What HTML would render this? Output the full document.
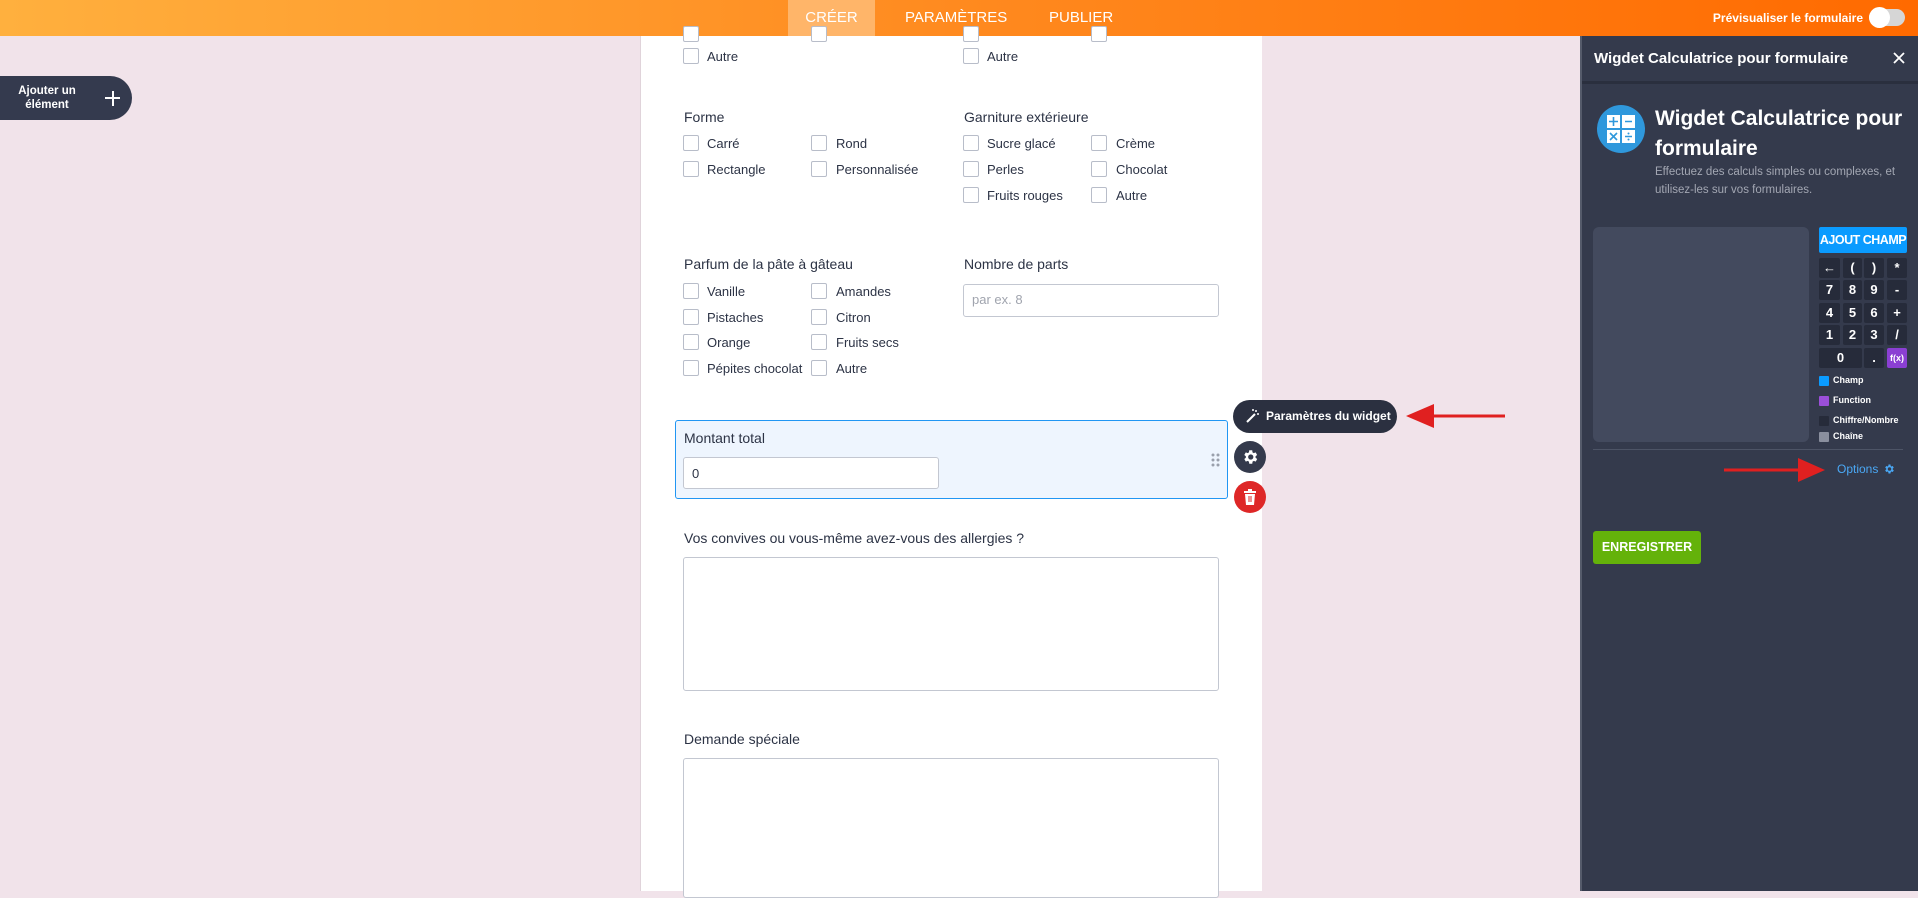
<!DOCTYPE html>
<html><head><meta charset="utf-8">
<style>
*{box-sizing:border-box;margin:0;padding:0}
body{width:1918px;height:891px;overflow:hidden;background:#f1e3ea;font-family:"Liberation Sans",sans-serif;position:relative;color:#2c3345}
.a{position:absolute}
.hdr{left:0;top:0;width:1918px;height:36px;background:linear-gradient(90deg,#ffb03e,#ff8a1f 50%,#ff6a00)}
.tab{top:0;height:36px;line-height:36px;color:#fff;font-size:15px;text-align:center}
.form{left:640px;top:36px;width:622px;height:855px;background:#fff;border-left:1px solid #e0d3da}
.cb{width:16px;height:16px;border:1px solid #b8bdc9;border-radius:2px;background:#fff}
.t{font-size:13px;color:#2c3345;white-space:nowrap}
.lbl{font-size:14px;color:#2c3345;white-space:nowrap}
.inp{border:1px solid #c3c7d1;border-radius:3px;background:#fff}
.panel{left:1580px;top:36px;width:338px;height:855px;background:#343a4c}
.key{background:#262b3a;color:#fff;font-size:13px;font-weight:bold;text-align:center;line-height:20px;height:20px;border-radius:2px}
.lg{font-size:9px;font-weight:bold;color:#fff}
.sq{width:10px;height:10px;border-radius:1px}
</style></head><body>
<div class="a hdr"></div>
<div class="a tab" style="left:788px;width:87px;background:#ffb569">CRÉER</div>
<div class="a tab" style="left:905px">PARAMÈTRES</div>
<div class="a tab" style="left:1049px">PUBLIER</div>
<div class="a" style="right:55px;top:11px;font-size:12px;color:#fff;font-weight:bold">Prévisualiser le formulaire</div>
<div class="a" style="left:1869px;top:9px;width:36px;height:17px;border-radius:9px;background:#d6d6d6"></div>
<div class="a" style="left:1869px;top:7px;width:21px;height:21px;border-radius:50%;background:#fff"></div>

<div class="a" style="left:0;top:76px;width:132px;height:44px;background:#343a4e;border-radius:0 22px 22px 0"></div>
<div class="a" style="left:12px;top:84px;width:70px;color:#fff;font-size:11.5px;font-weight:bold;text-align:center;line-height:14px">Ajouter un élément</div>
<div class="a" style="left:105px;top:97px;width:15px;height:2px;background:#fff"></div>
<div class="a" style="left:111.5px;top:90.5px;width:2px;height:15px;background:#fff"></div>

<div class="a form"></div>
<div class="a cb" style="left:683px;top:26px"></div><div class="a cb" style="left:811px;top:26px"></div><div class="a cb" style="left:963px;top:26px"></div><div class="a cb" style="left:1091px;top:26px"></div>
<div class="a cb" style="left:683px;top:48px"></div><div class="a t" style="left:707px;top:49px">Autre</div>
<div class="a cb" style="left:963px;top:48px"></div><div class="a t" style="left:987px;top:49px">Autre</div>

<div class="a lbl" style="left:684px;top:109px">Forme</div>
<div class="a lbl" style="left:964px;top:109px">Garniture extérieure</div>
<div class="a cb" style="left:683px;top:135px"></div><div class="a t" style="left:707px;top:136px">Carré</div>
<div class="a cb" style="left:811px;top:135px"></div><div class="a t" style="left:836px;top:136px">Rond</div>
<div class="a cb" style="left:683px;top:161px"></div><div class="a t" style="left:707px;top:162px">Rectangle</div>
<div class="a cb" style="left:811px;top:161px"></div><div class="a t" style="left:836px;top:162px">Personnalisée</div>
<div class="a cb" style="left:963px;top:135px"></div><div class="a t" style="left:987px;top:136px">Sucre glacé</div>
<div class="a cb" style="left:1091px;top:135px"></div><div class="a t" style="left:1116px;top:136px">Crème</div>
<div class="a cb" style="left:963px;top:161px"></div><div class="a t" style="left:987px;top:162px">Perles</div>
<div class="a cb" style="left:1091px;top:161px"></div><div class="a t" style="left:1116px;top:162px">Chocolat</div>
<div class="a cb" style="left:963px;top:187px"></div><div class="a t" style="left:987px;top:188px">Fruits rouges</div>
<div class="a cb" style="left:1091px;top:187px"></div><div class="a t" style="left:1116px;top:188px">Autre</div>

<div class="a lbl" style="left:684px;top:256px">Parfum de la pâte à gâteau</div>
<div class="a lbl" style="left:964px;top:256px">Nombre de parts</div>
<div class="a cb" style="left:683px;top:283px"></div><div class="a t" style="left:707px;top:284px">Vanille</div>
<div class="a cb" style="left:811px;top:283px"></div><div class="a t" style="left:836px;top:284px">Amandes</div>
<div class="a cb" style="left:683px;top:309px"></div><div class="a t" style="left:707px;top:310px">Pistaches</div>
<div class="a cb" style="left:811px;top:309px"></div><div class="a t" style="left:836px;top:310px">Citron</div>
<div class="a cb" style="left:683px;top:334px"></div><div class="a t" style="left:707px;top:335px">Orange</div>
<div class="a cb" style="left:811px;top:334px"></div><div class="a t" style="left:836px;top:335px">Fruits secs</div>
<div class="a cb" style="left:683px;top:360px"></div><div class="a t" style="left:707px;top:361px">Pépites chocolat</div>
<div class="a cb" style="left:811px;top:360px"></div><div class="a t" style="left:836px;top:361px">Autre</div>
<div class="a inp" style="left:963px;top:284px;width:256px;height:33px"></div>
<div class="a t" style="left:972px;top:292px;color:#a0a4ae">par ex. 8</div>

<div class="a" style="left:675px;top:420px;width:553px;height:79px;background:#eef5fe;border:1px solid #2196f3;border-radius:3px"></div>
<div class="a lbl" style="left:684px;top:430px">Montant total</div>
<div class="a inp" style="left:683px;top:457px;width:256px;height:32px"></div>
<div class="a t" style="left:692px;top:466px">0</div>
<svg class="a" style="left:1211px;top:453px" width="10" height="16"><g fill="#9aa0ac"><circle cx="2" cy="2" r="1.5"/><circle cx="7" cy="2" r="1.5"/><circle cx="2" cy="7" r="1.5"/><circle cx="7" cy="7" r="1.5"/><circle cx="2" cy="12" r="1.5"/><circle cx="7" cy="12" r="1.5"/></g></svg>

<div class="a" style="left:1233px;top:400px;width:164px;height:33px;background:#2b3040;border-radius:17px"></div>
<svg class="a" style="left:1244px;top:408px" width="16" height="16"><path d="M3 14 L11 6" stroke="#fff" stroke-width="2"/><g fill="#fff"><circle cx="12" cy="3" r="1"/><circle cx="14" cy="6" r="1"/><circle cx="9" cy="2" r="1"/></g></svg>
<div class="a" style="left:1266px;top:409px;font-size:12px;font-weight:bold;color:#fff">Paramètres du widget</div>
<div class="a" style="left:1234px;top:441px;width:32px;height:32px;border-radius:50%;background:#343a4c"></div>
<svg class="a" style="left:1241px;top:448px" width="18" height="18" viewBox="0 0 24 24"><path fill="#fff" d="M19.4 13a7.5 7.5 0 0 0 0-2l2.1-1.6-2-3.5-2.5 1a7 7 0 0 0-1.7-1L15 3h-4l-.4 2.9a7 7 0 0 0-1.7 1l-2.5-1-2 3.5L6.5 11a7.5 7.5 0 0 0 0 2l-2.1 1.6 2 3.5 2.5-1a7 7 0 0 0 1.7 1L11 21h4l.4-2.9a7 7 0 0 0 1.7-1l2.5 1 2-3.5zM13 15.5a3.5 3.5 0 1 1 0-7 3.5 3.5 0 0 1 0 7z"/></svg>
<div class="a" style="left:1234px;top:481px;width:32px;height:32px;border-radius:50%;background:#de2727"></div>
<svg class="a" style="left:1243px;top:489px" width="14" height="16"><path fill="#fff" d="M1 2h12v2H1zM5 0h4v2H5zM2 5h10l-1 11H3z"/><path d="M6 7v6M8 7v6" stroke="#de2727" stroke-width="1"/></svg>

<div class="a lbl" style="left:684px;top:530px">Vos convives ou vous-même avez-vous des allergies ?</div>
<div class="a inp" style="left:683px;top:557px;width:536px;height:134px"></div>
<div class="a lbl" style="left:684px;top:731px">Demande spéciale</div>
<div class="a inp" style="left:683px;top:758px;width:536px;height:140px"></div>

<svg class="a" style="left:1400px;top:400px" width="110" height="32"><path d="M105 16H30" stroke="#e02020" stroke-width="3"/><path d="M6 16 L34 4 L34 28Z" fill="#e02020"/></svg>

<div class="a panel"></div>
<div class="a" style="left:1580px;top:36px;width:2px;height:855px;background:#555b6b"></div>
<div class="a" style="left:1594px;top:50px;font-size:15px;font-weight:bold;color:#fff">Wigdet Calculatrice pour formulaire</div>
<svg class="a" style="left:1893px;top:52px" width="12" height="12"><path d="M1 1L11 11M11 1L1 11" stroke="#fff" stroke-width="1.8"/></svg>
<div class="a" style="left:1582px;top:81px;width:336px;height:3px;background:#2a2f3e"></div>
<div class="a" style="left:1597px;top:105px;width:48px;height:48px;border-radius:50%;background:#2f98dc"></div>
<svg class="a" style="left:1607px;top:115px" width="28" height="28"><g fill="#fff"><rect x="0" y="0" width="13" height="13"/><rect x="15" y="0" width="13" height="13"/><rect x="0" y="15" width="13" height="13"/><rect x="15" y="15" width="13" height="13"/></g><g stroke="#2f98dc" stroke-width="1.6"><path d="M6.5 2v9M2 6.5h9M18 6.5h7M3 18l7 7M10 18l-7 7M18 21.5h7"/></g><g fill="#2f98dc"><circle cx="21.5" cy="18.5" r="1"/><circle cx="21.5" cy="24.5" r="1"/></g></svg>
<div class="a" style="left:1655px;top:104px;font-size:21px;font-weight:bold;color:#fff;line-height:30px;width:262px">Wigdet Calculatrice pour formulaire</div>
<div class="a" style="left:1655px;top:163px;font-size:11.5px;color:#a3a7b3;line-height:18px;width:262px">Effectuez des calculs simples ou complexes, et utilisez-les sur vos formulaires.</div>

<div class="a" style="left:1593px;top:227px;width:216px;height:215px;background:#434a5e;border-radius:6px"></div>
<div class="a" style="left:1819px;top:227px;width:88px;height:26px;background:#0a9bff;border-radius:2px;color:#fff;font-size:12.5px;font-weight:bold;text-align:center;line-height:26px;white-space:nowrap;overflow:hidden;letter-spacing:-0.5px">AJOUT CHAMP</div>
<div class="a key" style="left:1819px;top:258px;width:21px">←</div>
<div class="a key" style="left:1843px;top:258px;width:19px">(</div>
<div class="a key" style="left:1864px;top:258px;width:20px">)</div>
<div class="a key" style="left:1887px;top:258px;width:20px">*</div>
<div class="a key" style="left:1819px;top:280px;width:21px">7</div>
<div class="a key" style="left:1843px;top:280px;width:19px">8</div>
<div class="a key" style="left:1864px;top:280px;width:20px">9</div>
<div class="a key" style="left:1887px;top:280px;width:20px">-</div>
<div class="a key" style="left:1819px;top:303px;width:21px">4</div>
<div class="a key" style="left:1843px;top:303px;width:19px">5</div>
<div class="a key" style="left:1864px;top:303px;width:20px">6</div>
<div class="a key" style="left:1887px;top:303px;width:20px">+</div>
<div class="a key" style="left:1819px;top:325px;width:21px">1</div>
<div class="a key" style="left:1843px;top:325px;width:19px">2</div>
<div class="a key" style="left:1864px;top:325px;width:20px">3</div>
<div class="a key" style="left:1887px;top:325px;width:20px">/</div>
<div class="a key" style="left:1819px;top:348px;width:43px">0</div>
<div class="a key" style="left:1864px;top:348px;width:20px">.</div>
<div class="a key" style="left:1887px;top:348px;width:20px;background:#8b3fd3;font-size:9px">f(x)</div>
<div class="a sq" style="left:1819px;top:376px;background:#0a9bff"></div><div class="a lg" style="left:1833px;top:375px">Champ</div>
<div class="a sq" style="left:1819px;top:396px;background:#9b4fd9"></div><div class="a lg" style="left:1833px;top:395px">Function</div>
<div class="a sq" style="left:1819px;top:416px;background:#262b3a"></div><div class="a lg" style="left:1833px;top:415px">Chiffre/Nombre</div>
<div class="a sq" style="left:1819px;top:432px;background:#8a8f9e"></div><div class="a lg" style="left:1833px;top:431px">Chaîne</div>
<div class="a" style="left:1593px;top:449px;width:310px;height:1px;background:#4d5466"></div>

<svg class="a" style="left:1720px;top:455px" width="110" height="30"><path d="M4 15H90" stroke="#e02020" stroke-width="3"/><path d="M105 15 L78 3 L78 27Z" fill="#e02020"/></svg>
<div class="a" style="left:1837px;top:462px;font-size:12px;color:#4aa8f5">Options</div>
<svg class="a" style="left:1883px;top:463px" width="12" height="12" viewBox="0 0 24 24"><path fill="#4aa8f5" d="M19.4 13a7.5 7.5 0 0 0 0-2l2.1-1.6-2-3.5-2.5 1a7 7 0 0 0-1.7-1L15 3h-4l-.4 2.9a7 7 0 0 0-1.7 1l-2.5-1-2 3.5L6.5 11a7.5 7.5 0 0 0 0 2l-2.1 1.6 2 3.5 2.5-1a7 7 0 0 0 1.7 1L11 21h4l.4-2.9a7 7 0 0 0 1.7-1l2.5 1 2-3.5zM13 15.5a3.5 3.5 0 1 1 0-7 3.5 3.5 0 0 1 0 7z"/></svg>

<div class="a" style="left:1593px;top:531px;width:108px;height:33px;background:#64b20a;border-radius:3px;color:#fff;font-size:12.5px;font-weight:bold;text-align:center;line-height:33px">ENREGISTRER</div>
</body></html>
